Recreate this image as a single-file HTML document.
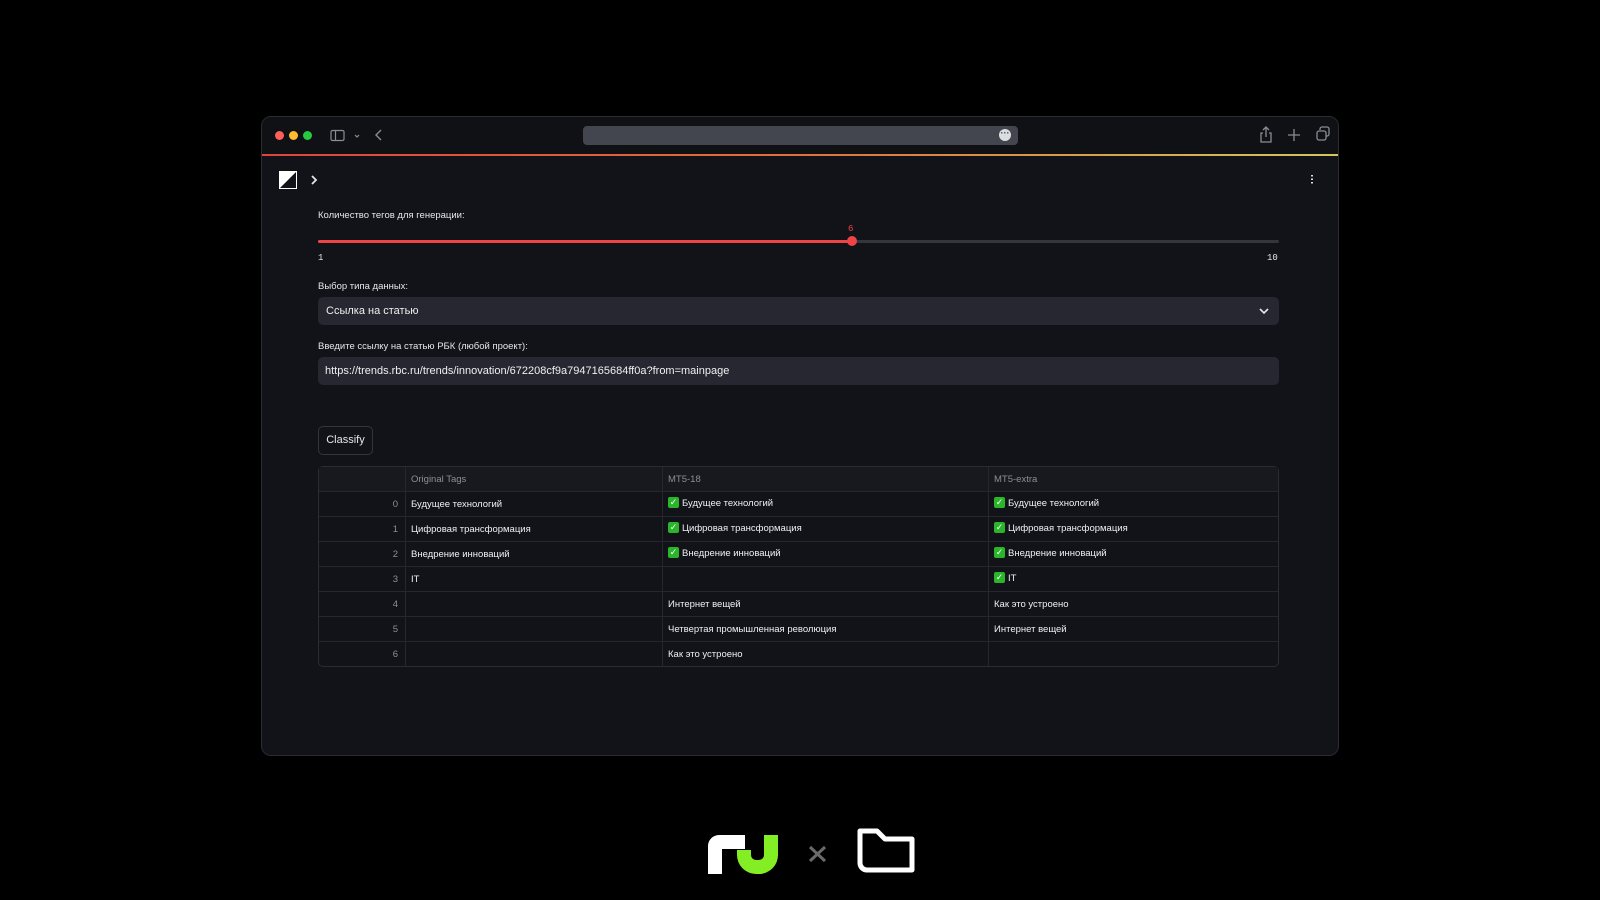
<!DOCTYPE html>
<html><head><meta charset="utf-8"><style>
*{margin:0;padding:0;box-sizing:border-box}
body{width:1600px;height:900px;background:#000;position:relative;overflow:hidden;font-family:"Liberation Sans","DejaVu Sans",sans-serif;color:#e6e6e9}
.win{position:absolute;left:261px;top:116px;width:1078px;height:640px;background:#121318;border:1px solid #2a2c31;border-radius:10px;overflow:hidden}
.bar{position:absolute;left:0;top:0;width:100%;height:37px;background:#0f1115}
.grad{position:absolute;left:0;top:37px;width:100%;height:2px;background:linear-gradient(90deg,#e0443b,#e0703e 50%,#d2c85a)}
.dot{position:absolute;top:14px;width:9px;height:9px;border-radius:50%}
.abs{position:absolute}
.lbl{position:absolute;left:56px;font-size:9.5px;color:#e6e6e9}
.box{position:absolute;left:56px;width:961px;background:#262730;border-radius:5px;font-size:11px;color:#f0f0f2;padding-left:8px}
table{position:absolute;left:56px;top:349px;width:961px;border-collapse:separate;border-spacing:0;border:1px solid #2a2c33;border-radius:5px;font-size:9.5px}
td{height:25px;border-top:1px solid #25272d;border-left:1px solid #25272d;padding:0 5px;color:#f0f0f2;white-space:nowrap}
tr:first-child td{border-top:none;height:24px;color:#8c8f96;background:#17191e}
td:first-child{border-left:none;text-align:right;color:#8c8f96;padding-right:7px}
.ck{display:inline-block;width:11px;height:11px;background:#2ab52a;border-radius:2px;vertical-align:middle;margin-right:3px;color:#fff;font-size:9px;line-height:11px;text-align:center;font-weight:bold;position:relative;top:-1px}
</style></head><body>
<div class="win">
 <div class="bar">
  <div class="dot" style="left:13px;background:#fe5f57"></div>
  <div class="dot" style="left:27px;background:#febc2e"></div>
  <div class="dot" style="left:41px;background:#28c840"></div>
  <svg class="abs" style="left:68px;top:12px" width="40" height="14" viewBox="0 0 40 14" fill="none" stroke="#8a8d93" stroke-width="1.2"><rect x="1" y="1.5" width="13" height="10" rx="1.5"/><line x1="5.5" y1="1.5" x2="5.5" y2="11.5"/><path d="M25 6l2 2 2-2"/></svg>
  <svg class="abs" style="left:112px;top:11px" width="10" height="14" fill="none" stroke="#8a8d93" stroke-width="1.4"><path d="M7 2L2 7l5 5"/></svg>
  <div class="abs" style="left:321px;top:9px;width:435px;height:19px;background:#43464e;border-radius:4px"></div>
  <div class="abs" style="left:737px;top:12px;width:12px;height:12px;border-radius:50%;background:#dcdde0;color:#43464e;font-size:9px;line-height:8px;text-align:center;font-weight:bold">···</div>
  <svg class="abs" style="left:997px;top:9px" width="80" height="18" fill="none" stroke="#8a8d93" stroke-width="1.3"><path d="M4 7H2v9h10V7h-2M7 11V1M4 4l3-3 3 3"/><path d="M35 3v12M29 9h12"/><rect x="58" y="5" width="9" height="9" rx="2"/><path d="M61 4V3a2 2 0 012-2h5a2 2 0 012 2v5a2 2 0 01-2 2h-1"/></svg>
 </div>
 <div class="grad"></div>
 <svg class="abs" style="left:17px;top:54px" width="18" height="18"><rect x="0" y="0" width="18" height="18" fill="#fff"/><path d="M0 18L18 0V18z" fill="#121318"/><path d="M2 18L18 2" stroke="#121318" stroke-width="1"/><rect x="0.5" y="0.5" width="17" height="17" fill="none" stroke="#fff"/></svg>
 <svg class="abs" style="left:48px;top:57px" width="8" height="12" fill="none" stroke="#e6e6e9" stroke-width="1.8"><path d="M2 2l4 4-4 4"/></svg>
 <div class="abs" style="left:1049px;top:57px;width:2px;height:10px;background:radial-gradient(circle,#ddd 0.9px,transparent 1px) 0 0/2px 3.5px"></div>
 <div class="lbl" style="top:93px">Количество тегов для генерации:</div>
 <div class="abs" style="left:56px;top:123px;width:961px;height:3px;background:#34363d;border-radius:2px"></div>
 <div class="abs" style="left:56px;top:123px;width:534px;height:3px;background:#ee4445;border-radius:2px"></div>
 <div class="abs" style="left:585px;top:119px;width:10px;height:10px;background:#ee4445;border-radius:50%"></div>
 <div class="abs" style="left:586px;top:107px;font-size:9px;color:#ee4445;font-family:'Liberation Mono',monospace">6</div>
 <div class="abs" style="left:56px;top:136px;font-size:9px;font-family:'Liberation Mono',monospace">1</div>
 <div class="abs" style="left:1005px;top:136px;font-size:9px;font-family:'Liberation Mono',monospace">10</div>
 <div class="lbl" style="top:164px">Выбор типа данных:</div>
 <div class="box" style="top:180px;height:28px;line-height:28px">Ссылка на статью
  <svg class="abs" style="right:10px;top:10px" width="10" height="8" fill="none" stroke="#e6e6e9" stroke-width="1.6"><path d="M1 2l4 4 4-4"/></svg></div>
 <div class="lbl" style="top:224px">Введите ссылку на статью РБК (любой проект):</div>
 <div class="box" style="top:240px;height:28px;line-height:28px;padding-left:7px">https://trends.rbc.ru/trends/innovation/672208cf9a7947165684ff0a?from=mainpage</div>
 <div class="abs" style="left:56px;top:309px;width:55px;height:29px;border:1px solid #33353c;border-radius:5px;font-size:11px;line-height:27px;text-align:center">Classify</div>
 <table>
  <colgroup><col style="width:86px"><col style="width:257px"><col style="width:326px"><col></colgroup>
  <tr><td></td><td>Original Tags</td><td>MT5-18</td><td>MT5-extra</td></tr>
  <tr><td>0</td><td>Будущее технологий</td><td><span class="ck">✓</span>Будущее технологий</td><td><span class="ck">✓</span>Будущее технологий</td></tr>
  <tr><td>1</td><td>Цифровая трансформация</td><td><span class="ck">✓</span>Цифровая трансформация</td><td><span class="ck">✓</span>Цифровая трансформация</td></tr>
  <tr><td>2</td><td>Внедрение инноваций</td><td><span class="ck">✓</span>Внедрение инноваций</td><td><span class="ck">✓</span>Внедрение инноваций</td></tr>
  <tr><td>3</td><td>IT</td><td></td><td><span class="ck">✓</span>IT</td></tr>
  <tr><td>4</td><td></td><td>Интернет вещей</td><td>Как это устроено</td></tr>
  <tr><td>5</td><td></td><td>Четвертая промышленная революция</td><td>Интернет вещей</td></tr>
  <tr><td>6</td><td></td><td>Как это устроено</td><td></td></tr>
 </table>
</div>
<svg class="abs" style="left:706px;top:822px" width="215" height="56" viewBox="706 822 215 56">
 <path d="M708 874V846a11 11 0 0 1 11-11h26v14h-23v25z" fill="#fff"/>
 <path d="M764 835h14v20a19 19 0 0 1-19 19h-3a19 19 0 0 1-19-19v-5h14v5a5 5 0 0 0 5 5h3a5 5 0 0 0 5-5z" fill="#84ee25"/>
 <path d="M810 847l15 14M825 847l-15 14" stroke="#6a6a6a" stroke-width="3"/>
 <path d="M860 831h17l8 8h27v31h-45a7 7 0 0 1-7-7z" fill="none" stroke="#fff" stroke-width="5" stroke-linejoin="round"/>
</svg>
</body></html>
